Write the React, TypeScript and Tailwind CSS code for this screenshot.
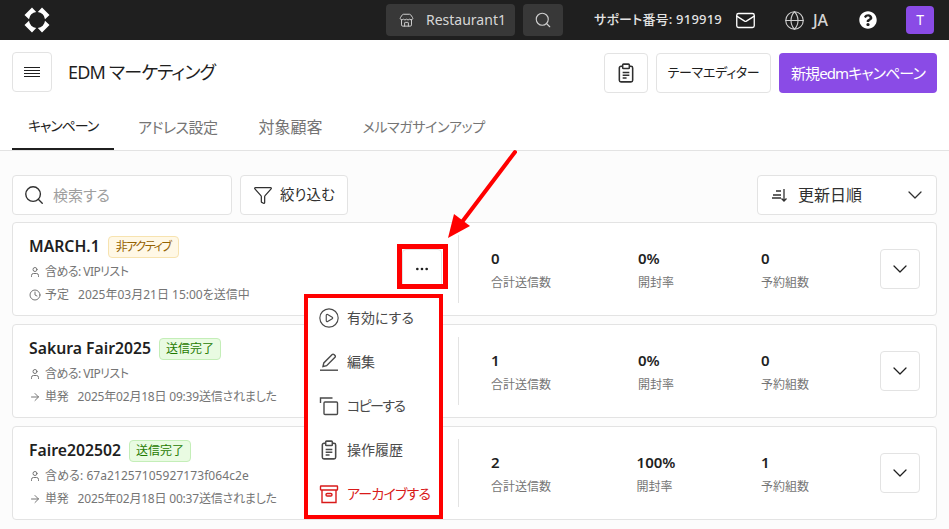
import { ChevronDown, Clock, Filter, Search, User, ArrowRight, Ellipsis, Store, Mail, Globe, CirclePlay } from "lucide-react";
import { FaQuestionCircle } from "react-icons/fa";

const font = "font-['Noto_Sans','Noto_Sans_CJK_JP',sans-serif]";

interface Campaign {
  name: string;
  badge: string;
  badgeType: "warn" | "ok";
  audience: string;
  kind: string;
  schedule: string;
  scheduled?: boolean;
  sent: string;
  open: string;
  booked: string;
}

const campaigns: Campaign[] = [
  { name: "MARCH.1", badge: "非アクティブ", badgeType: "warn", audience: "含める: VIPリスト", kind: "予定", schedule: "2025年03月21日 15:00を送信中", scheduled: true, sent: "0", open: "0%", booked: "0" },
  { name: "Sakura Fair2025", badge: "送信完了", badgeType: "ok", audience: "含める: VIPリスト", kind: "単発", schedule: "2025年02月18日 09:39送信されました", sent: "1", open: "0%", booked: "0" },
  { name: "Faire202502", badge: "送信完了", badgeType: "ok", audience: "含める: 67a21257105927173f064c2e", kind: "単発", schedule: "2025年02月18日 00:37送信されました", sent: "2", open: "100%", booked: "1" },
];

function ClipboardIcon({ size = 18 }: { size?: number }) {
  return (
    <svg width={size} height={size} viewBox="0 0 18 18" fill="none" stroke="currentColor" strokeWidth="1.4">
      <path d="M6 3H4.5A1.5 1.5 0 0 0 3 4.5v11A1.5 1.5 0 0 0 4.5 17h9a1.5 1.5 0 0 0 1.5-1.5v-11A1.5 1.5 0 0 0 13.5 3H12" />
      <rect x="6" y="1" width="6" height="4" rx="0.8" />
      <path d="M6 8.5h6M6 11h6M6 13.5h3.5" />
    </svg>
  );
}

function PencilIcon() {
  return (
    <svg width="20" height="20" viewBox="0 0 20 20" fill="none" stroke="currentColor" strokeWidth="1.4">
      <path d="M4 14.5l.8-3.6L13.2 2.5a1.2 1.2 0 0 1 1.7 0l1.1 1.1a1.2 1.2 0 0 1 0 1.7L7.6 13.7z" />
      <path d="M1 18.2h18" />
    </svg>
  );
}

function CopyIcon() {
  return (
    <svg width="20" height="20" viewBox="0 0 20 20" fill="none" stroke="currentColor" strokeWidth="1.4">
      <path d="M1.5 7V2h12" />
      <rect x="5" y="6" width="13.5" height="12.5" rx="1" />
    </svg>
  );
}

function ArchiveIcon() {
  return (
    <svg width="20" height="20" viewBox="0 0 20 20" fill="none" stroke="currentColor" strokeWidth="1.4">
      <rect x="1.5" y="2" width="17" height="4" rx="0.5" />
      <path d="M3 6v12.5h14V6" />
      <rect x="7" y="9.5" width="6" height="2.5" rx="1.2" />
    </svg>
  );
}

function Stat({ value, label }: { value: string; label: string }) {
  return (
    <div>
      <div className="text-[15px] leading-5 font-semibold text-[#1f1f1f]">{value}</div>
      <div className="mt-[5px] text-xs leading-5 text-[#757575]">{label}</div>
    </div>
  );
}

function CampaignCard({ c }: { c: Campaign }) {
  const audienceTracking = c.audience.includes("VIP") ? "tracking-[-0.55px]" : "tracking-[0.07px]";
  return (
    <div className="flex h-[94px] items-center rounded border border-[#e3e3e3] bg-white px-4">
      <div className="flex-1 pt-[3px]">
        <div className="flex h-6 items-center gap-2">
          <span className="text-[15.75px] font-semibold text-[#1f1f1f]">{c.name}</span>
          <span className={c.badgeType === "warn"
            ? "rounded border border-[#f7e3b0] bg-[#fff8e6] px-[7px] text-xs leading-5 tracking-[-1.4px] text-[#946200]"
            : "rounded border border-[#c4eeb8] bg-[#e9fbe2] px-[6px] text-xs leading-5 text-[#1f7a00]"}>{c.badge}</span>
        </div>
        <div className={`mt-[2px] flex items-center gap-1 text-xs leading-[22px] text-[#757575] ${audienceTracking}`}>
          <User size={12} />
          {c.audience}
        </div>
        <div className={`mt-px flex items-center gap-1 text-xs leading-[22px] text-[#757575] ${c.scheduled ? "" : "tracking-[-0.2px]"}`}>
          {c.scheduled ? <Clock size={12} /> : <ArrowRight size={12} />}
          <span className="mr-[5px]">{c.kind}</span>
          {c.schedule}
        </div>
      </div>
      <button className="flex h-10 w-10 items-center justify-center rounded border border-[#e3e3e3] bg-white text-[#1f1f1f]">
        <Ellipsis size={16} />
      </button>
      <div className="mx-4 h-[68px] w-px bg-[#e3e3e3]" />
      <div className="ml-4 flex w-[318px] justify-between pt-[2px]">
        <Stat value={c.sent} label="合計送信数" />
        <Stat value={c.open} label="開封率" />
        <Stat value={c.booked} label="予約組数" />
      </div>
      <button className="ml-[71px] flex h-10 w-10 items-center justify-center rounded border border-[#e3e3e3] bg-white text-[#1f1f1f]">
        <ChevronDown size={24} strokeWidth={1.25} />
      </button>
    </div>
  );
}

export default function App() {
  const menuItems = [
    { icon: <CirclePlay size={22} strokeWidth={1.25} />, label: "有効にする", cls: "" },
    { icon: <PencilIcon />, label: "編集", cls: "" },
    { icon: <CopyIcon />, label: "コピーする", cls: "tracking-[-1.6px]" },
    { icon: <ClipboardIcon size={20} />, label: "操作履歴", cls: "" },
    { icon: <ArchiveIcon />, label: "アーカイブする", cls: "tracking-[-0.8px] text-[#d91a1a]" },
  ];

  return (
    <div className={`relative h-[529px] w-[949px] overflow-hidden bg-[#fcfcfc] ${font} [font-feature-settings:"palt"]`}>
      <div className="flex h-10 items-center bg-[#1f1f1f] pl-6 shadow-[0_1px_3px_rgba(0,0,0,0.4)]">
        <svg width="26" height="26" viewBox="0 0 26 26" fill="white">
          <path d="M8 0.5 L0.5 8 L5 12.2 A8 8 0 0 1 12.2 5 Z" />
          <path d="M18 0.5 L25.5 8 L21 12.2 A8 8 0 0 0 13.8 5 Z" />
          <path d="M8 25.5 L0.5 18 L5 13.8 A8 8 0 0 0 12.2 21 Z" />
          <path d="M18 25.5 L25.5 18 L21 13.8 A8 8 0 0 1 13.8 21 Z" />
        </svg>
        <div className="ml-[336px] flex h-8 w-[129px] items-center gap-3 rounded bg-[#383838] pl-[13px] text-sm text-[#d6d6d6]">
          <Store size={15} strokeWidth={1.5} />
          Restaurant1
        </div>
        <div className="ml-2 flex h-8 w-10 items-center justify-center rounded bg-[#383838] text-[#cfcfcf]">
          <Search size={18} strokeWidth={1.5} />
        </div>
        <span className="ml-[31px] text-[13px] font-medium tracking-[0.2px] whitespace-nowrap text-[#e3e3e3]">サポート番号: 919919</span>
        <Mail size={21} strokeWidth={1.5} className="ml-[13px] shrink-0 text-white" />
        <Globe size={21} strokeWidth={1.25} className="ml-[28px] shrink-0 text-[#cfcfcf]" />
        <span className="ml-2 text-base font-medium text-[#d6d6d6]">JA</span>
        <FaQuestionCircle size={18} className="ml-[31px] shrink-0 text-white" />
        <div className="ml-[29px] flex h-7 w-7 shrink-0 items-center justify-center rounded bg-[#8a4be6] text-sm text-white">T</div>
      </div>

      <div className="bg-white">
        <div className="flex h-[70px] items-start px-3 pt-[13px]">
          <button className="-mt-px flex h-10 w-10 items-center justify-center rounded border border-[#e3e3e3] bg-white text-[#1f1f1f]">
            <svg width="16" height="13" viewBox="0 0 16 13" stroke="currentColor" strokeWidth="1">
              <path d="M0 1.5h16M0 4.5h16M0 7.5h16M0 10.5h16" />
            </svg>
          </button>
          <h1 className="ml-4 flex-1 text-lg leading-[38px] font-normal tracking-[-0.8px] text-[#1f1f1f]">EDM マーケティング</h1>
          <button className="flex h-10 w-11 items-center justify-center rounded border border-[#e3e3e3] bg-white text-[#303030]">
            <ClipboardIcon size={20} />
          </button>
          <button className="ml-2 h-10 w-[115px] rounded border border-[#e3e3e3] bg-white text-[13px] tracking-[-0.3px] text-[#1f1f1f]">テーマエディター</button>
          <button className="ml-2 h-10 w-[158px] rounded bg-[#8a4be6] text-[15px] tracking-[-0.9px] text-white">新規edmキャンペーン</button>
        </div>
        <div className="flex h-[41px] items-center border-b border-[#e3e3e3] px-3 text-[#757575]">
          <div className="flex h-10 w-[102px] items-center justify-center border-b-2 border-[#1f1f1f] pb-[6px] text-sm tracking-[-1.1px] text-[#1f1f1f]">キャンペーン</div>
          <span className="ml-6 pb-[6px] text-[15px] tracking-[-0.5px]">アドレス設定</span>
          <span className="ml-[41px] pb-[6px] text-base">対象顧客</span>
          <span className="ml-10 pb-[6px] text-sm tracking-[-0.4px]">メルマガサインアップ</span>
        </div>
      </div>

      <div className="flex flex-col gap-2 px-3 pt-6">
        <div className="-mb-px flex items-center gap-2">
          <div className="flex h-10 w-[220px] items-center gap-[8px] rounded border border-[#e3e3e3] bg-white pl-[10px] text-[15px] text-[#9e9e9e]">
            <Search size={22} strokeWidth={1.5} className="text-[#303030]" />
            検索する
          </div>
          <div className="flex h-10 w-[108px] items-center gap-[7px] rounded border border-[#e3e3e3] bg-white pl-[12px] text-[14.5px] text-[#303030]">
            <Filter size={20} strokeWidth={1.5} />
            絞り込む
          </div>
          <div className="ml-auto flex h-10 w-[180px] items-center rounded border border-[#e3e3e3] bg-white pr-[9px] pl-[13px] text-base text-[#303030]">
            <svg width="18" height="18" viewBox="0 0 18 18" fill="none" stroke="#303030" strokeWidth="1.3">
              <path d="M5 5h5M2 9h8M1 12h9M13 3v12M10.5 12.5 13 15l2.5-2.5" />
            </svg>
            <span className="ml-[9px] flex-1">更新日順</span>
            <ChevronDown size={24} strokeWidth={1.25} />
          </div>
        </div>
        {campaigns.map((c) => <CampaignCard key={c.name} c={c} />)}
      </div>

      <div className="absolute top-[294px] left-[304px] h-[225px] w-[139px] border-[4px] border-[#ff0000] bg-white">
        <div className="-mt-[2px]">
          {menuItems.map((m) => (
            <div key={m.label} className={`flex h-11 items-center text-sm text-[#4a4a4a] ${m.cls}`}>
              <span className="flex w-[39px] justify-center pl-[3px]">{m.icon}</span>
              {m.label}
            </div>
          ))}
        </div>
      </div>

      <div className="absolute top-[244px] left-[397px] h-[45px] w-[51px] border-[5px] border-[#ff0000]" />

      <svg className="absolute top-0 left-0" width="949" height="529" fill="none">
        <path d="M515 152 L462 222" stroke="#ff0000" strokeWidth="4" strokeLinecap="round" />
        <path d="M448 238 L454 214 L470 226 Z" fill="#ff0000" />
      </svg>
    </div>
  );
}
